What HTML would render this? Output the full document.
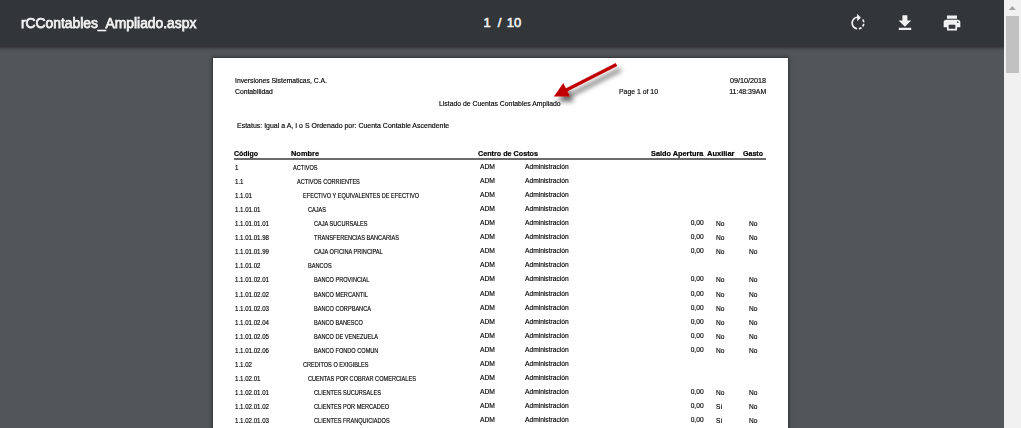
<!DOCTYPE html>
<html><head><meta charset="utf-8">
<style>
html,body{margin:0;padding:0;width:1021px;height:428px;overflow:hidden;background:#525659;font-family:"Liberation Sans",sans-serif;}
#tb{position:absolute;left:0;top:0;width:1004px;height:47px;background:#323639;z-index:3;}
#tbs{position:absolute;left:0;top:47px;width:1004px;height:4px;z-index:3;background:linear-gradient(rgba(20,0,0,.36),rgba(0,0,0,.14) 45%,rgba(0,0,0,0));}
#title{position:absolute;left:21px;top:15px;font-size:14px;font-weight:normal;-webkit-text-stroke:0.75px #f1f1f1;color:#f1f1f1;white-space:nowrap;line-height:16px;letter-spacing:0px;transform:scaleX(0.988);transform-origin:0 0;}
.pn{position:absolute;top:15px;font-size:13px;font-weight:normal;-webkit-text-stroke:0.6px #f1f1f1;color:#f1f1f1;white-space:nowrap;line-height:16px;}
.ic{position:absolute;fill:#f1f1f1;}
#sb{position:absolute;left:1004px;top:0;width:17px;height:428px;background:#f1f1f1;z-index:4;}
#thumb{position:absolute;left:2px;top:16px;width:13px;height:57px;background:#c1c1c1;}
#page{position:absolute;left:213px;top:58px;width:575px;height:400px;background:#fff;box-shadow:0 0 1px 1px rgba(0,0,0,.15),0 0 4px 1px rgba(0,0,0,.3);}
.t{position:absolute;white-space:nowrap;color:#000;font-size:7px;line-height:8px;transform-origin:0 0;-webkit-text-stroke:0.15px #000;}
</style></head><body>
<div id="tb">
  <div id="title">rCContables_Ampliado.aspx</div>
  <div class="pn" style="left:483.5px">1</div><div class="pn" style="left:497.8px">/</div><div class="pn" style="left:506.8px">10</div>
  <svg class="ic" style="left:848px;top:13.1px" width="20" height="20" viewBox="0 0 24 24"><path d="M15.55 5.55L11 1v3.07C7.06 4.56 4 7.920 4 12s3.05 7.44 7 7.93v-2.02c-2.84-.48-5-2.94-5-5.91s2.16-5.43 5-5.91V10l4.55-4.45zM19.93 11c-.17-1.39-.72-2.73-1.62-3.89l-1.42 1.42c.54.75.88 1.6 1.02 2.47h2.02zM13 17.9v2.02c1.39-.17 2.74-.71 3.9-1.61l-1.44-1.44c-.75.54-1.59.89-2.46 1.03zm3.89-2.42l1.42 1.41c.9-1.16 1.45-2.5 1.62-3.89h-2.02c-.14.87-.48 1.72-1.02 2.48z"/></svg>
  <svg class="ic" style="left:0;top:0" width="1004" height="47" viewBox="0 0 1004 47"><path d="M902.4 15.3h5v5.3h3.8l-6.3 6.1l-6.3-6.1h3.8z M898.8 27.8h12.4v2.2h-12.4z"/></svg>
  <svg class="ic" style="left:941.7px;top:12.7px" width="20" height="20" viewBox="0 0 24 24"><path d="M19 8H5c-1.66 0-3 1.34-3 3v6h4v4h12v-4h4v-6c0-1.66-1.34-3-3-3zm-3 11H8v-5h8v5zm3-7c-.55 0-1-.45-1-1s.45-1 1-1 1 .45 1 1-.45 1-1 1zm-1-9H6v4h12V3z"/></svg>
</div>
<div id="tbs"></div>
<div id="sb"><div id="thumb"></div><svg style="position:absolute;left:0;top:0" width="17" height="20"><path d="M4.8 10 L8.3 6 L11.8 10 Z" fill="#a3a3a3"/></svg></div>
<div id="page">
<div class="t" style="top:18.07px;font-size:7px;line-height:10px;left:21.70px;transform:scaleX(0.969);transform-origin:0 0;">Inversiones Sistematicas, C.A.</div>
<div class="t" style="top:29.07px;font-size:7px;line-height:10px;left:21.70px;transform:scaleX(0.970);transform-origin:0 0;">Contabilidad</div>
<div class="t" style="top:41.07px;font-size:7px;line-height:10px;left:226.30px;transform:scaleX(0.977);transform-origin:0 0;">Listado de Cuentas Contables Ampliado</div>
<div class="t" style="top:29.07px;font-size:7px;line-height:10px;left:406.20px;transform:scaleX(0.982);transform-origin:0 0;">Page 1 of 10</div>
<div class="t" style="top:18.07px;font-size:7px;line-height:10px;right:21.80px;transform:scaleX(1.030);transform-origin:100% 0;">09/10/2018</div>
<div class="t" style="top:29.07px;font-size:7px;line-height:10px;right:21.80px;transform:scaleX(0.994);transform-origin:100% 0;">11:48:39AM</div>
<div class="t" style="top:63.07px;font-size:7px;line-height:10px;left:23.80px;transform:scaleX(0.997);transform-origin:0 0;">Estatus: Igual a A, I o S Ordenado por: Cuenta Contable Ascendente</div>
<div class="t" style="top:91.07px;font-size:7px;line-height:10px;font-weight:bold;-webkit-text-stroke:0.2px #000;left:21.40px;transform:scaleX(0.996);transform-origin:0 0;">Código</div>
<div class="t" style="top:91.07px;font-size:7px;line-height:10px;font-weight:bold;-webkit-text-stroke:0.2px #000;left:78.20px;transform:scaleX(1.059);transform-origin:0 0;">Nombre</div>
<div class="t" style="top:91.07px;font-size:7px;line-height:10px;font-weight:bold;-webkit-text-stroke:0.2px #000;left:264.80px;transform:scaleX(1.028);transform-origin:0 0;">Centro de Costos</div>
<div class="t" style="top:91.07px;font-size:7px;line-height:10px;font-weight:bold;-webkit-text-stroke:0.2px #000;left:438.20px;transform:scaleX(1.048);transform-origin:0 0;">Saldo Apertura</div>
<div class="t" style="top:91.07px;font-size:7px;line-height:10px;font-weight:bold;-webkit-text-stroke:0.2px #000;left:494.20px;transform:scaleX(1.071);transform-origin:0 0;">Auxiliar</div>
<div class="t" style="top:91.07px;font-size:7px;line-height:10px;font-weight:bold;-webkit-text-stroke:0.2px #000;left:529.90px;transform:scaleX(1.008);transform-origin:0 0;">Gasto</div>
<div style="position:absolute;left:21.4px;top:100.0px;width:531.8px;height:2px;background:#6b6b6b"></div>
<div class="t" style="top:105.07px;font-size:7px;line-height:10px;left:21.60px;transform:scaleX(0.874);transform-origin:0 0;">1</div>
<div class="t" style="top:105.07px;font-size:7px;line-height:10px;left:79.60px;transform:scaleX(0.800);transform-origin:0 0;">ACTIVOS</div>
<div class="t" style="top:104.07px;font-size:7px;line-height:10px;-webkit-text-stroke:0.15px #000;left:266.90px;transform:scaleX(0.964);transform-origin:0 0;">ADM</div>
<div class="t" style="top:104.07px;font-size:7px;line-height:10px;-webkit-text-stroke:0.15px #000;left:312.20px;transform:scaleX(0.952);transform-origin:0 0;">Administración</div>
<div class="t" style="top:119.07px;font-size:7px;line-height:10px;left:21.60px;transform:scaleX(0.874);transform-origin:0 0;">1.1</div>
<div class="t" style="top:119.07px;font-size:7px;line-height:10px;left:83.60px;transform:scaleX(0.800);transform-origin:0 0;">ACTIVOS CORRIENTES</div>
<div class="t" style="top:118.07px;font-size:7px;line-height:10px;-webkit-text-stroke:0.15px #000;left:266.90px;transform:scaleX(0.964);transform-origin:0 0;">ADM</div>
<div class="t" style="top:118.07px;font-size:7px;line-height:10px;-webkit-text-stroke:0.15px #000;left:312.20px;transform:scaleX(0.952);transform-origin:0 0;">Administración</div>
<div class="t" style="top:133.07px;font-size:7px;line-height:10px;left:21.60px;transform:scaleX(0.874);transform-origin:0 0;">1.1.01</div>
<div class="t" style="top:133.07px;font-size:7px;line-height:10px;left:89.90px;transform:scaleX(0.800);transform-origin:0 0;">EFECTIVO Y EQUIVALENTES DE EFECTIVO</div>
<div class="t" style="top:132.07px;font-size:7px;line-height:10px;-webkit-text-stroke:0.15px #000;left:266.90px;transform:scaleX(0.964);transform-origin:0 0;">ADM</div>
<div class="t" style="top:132.07px;font-size:7px;line-height:10px;-webkit-text-stroke:0.15px #000;left:312.20px;transform:scaleX(0.952);transform-origin:0 0;">Administración</div>
<div class="t" style="top:147.07px;font-size:7px;line-height:10px;left:21.60px;transform:scaleX(0.874);transform-origin:0 0;">1.1.01.01</div>
<div class="t" style="top:147.07px;font-size:7px;line-height:10px;left:95.40px;transform:scaleX(0.800);transform-origin:0 0;">CAJAS</div>
<div class="t" style="top:146.07px;font-size:7px;line-height:10px;-webkit-text-stroke:0.15px #000;left:266.90px;transform:scaleX(0.964);transform-origin:0 0;">ADM</div>
<div class="t" style="top:146.07px;font-size:7px;line-height:10px;-webkit-text-stroke:0.15px #000;left:312.20px;transform:scaleX(0.952);transform-origin:0 0;">Administración</div>
<div class="t" style="top:161.07px;font-size:7px;line-height:10px;left:21.60px;transform:scaleX(0.874);transform-origin:0 0;">1.1.01.01.01</div>
<div class="t" style="top:161.07px;font-size:7px;line-height:10px;left:101.20px;transform:scaleX(0.800);transform-origin:0 0;">CAJA SUCURSALES</div>
<div class="t" style="top:160.07px;font-size:7px;line-height:10px;-webkit-text-stroke:0.15px #000;left:266.90px;transform:scaleX(0.964);transform-origin:0 0;">ADM</div>
<div class="t" style="top:160.07px;font-size:7px;line-height:10px;-webkit-text-stroke:0.15px #000;left:312.20px;transform:scaleX(0.952);transform-origin:0 0;">Administración</div>
<div class="t" style="top:160.07px;font-size:7px;line-height:10px;-webkit-text-stroke:0.15px #000;right:84.70px;transform:scaleX(0.954);transform-origin:100% 0;">0,00</div>
<div class="t" style="top:161.07px;font-size:7px;line-height:10px;-webkit-text-stroke:0.15px #000;left:503.30px;transform:scaleX(0.940);transform-origin:0 0;">No</div>
<div class="t" style="top:161.07px;font-size:7px;line-height:10px;-webkit-text-stroke:0.15px #000;left:536.40px;transform:scaleX(0.940);transform-origin:0 0;">No</div>
<div class="t" style="top:175.07px;font-size:7px;line-height:10px;left:21.60px;transform:scaleX(0.874);transform-origin:0 0;">1.1.01.01.98</div>
<div class="t" style="top:175.07px;font-size:7px;line-height:10px;left:101.20px;transform:scaleX(0.800);transform-origin:0 0;">TRANSFERENCIAS BANCARIAS</div>
<div class="t" style="top:174.07px;font-size:7px;line-height:10px;-webkit-text-stroke:0.15px #000;left:266.90px;transform:scaleX(0.964);transform-origin:0 0;">ADM</div>
<div class="t" style="top:174.07px;font-size:7px;line-height:10px;-webkit-text-stroke:0.15px #000;left:312.20px;transform:scaleX(0.952);transform-origin:0 0;">Administración</div>
<div class="t" style="top:174.07px;font-size:7px;line-height:10px;-webkit-text-stroke:0.15px #000;right:84.70px;transform:scaleX(0.954);transform-origin:100% 0;">0,00</div>
<div class="t" style="top:175.07px;font-size:7px;line-height:10px;-webkit-text-stroke:0.15px #000;left:503.30px;transform:scaleX(0.940);transform-origin:0 0;">No</div>
<div class="t" style="top:175.07px;font-size:7px;line-height:10px;-webkit-text-stroke:0.15px #000;left:536.40px;transform:scaleX(0.940);transform-origin:0 0;">No</div>
<div class="t" style="top:189.07px;font-size:7px;line-height:10px;left:21.60px;transform:scaleX(0.874);transform-origin:0 0;">1.1.01.01.99</div>
<div class="t" style="top:189.07px;font-size:7px;line-height:10px;left:101.20px;transform:scaleX(0.800);transform-origin:0 0;">CAJA OFICINA PRINCIPAL</div>
<div class="t" style="top:188.07px;font-size:7px;line-height:10px;-webkit-text-stroke:0.15px #000;left:266.90px;transform:scaleX(0.964);transform-origin:0 0;">ADM</div>
<div class="t" style="top:188.07px;font-size:7px;line-height:10px;-webkit-text-stroke:0.15px #000;left:312.20px;transform:scaleX(0.952);transform-origin:0 0;">Administración</div>
<div class="t" style="top:188.07px;font-size:7px;line-height:10px;-webkit-text-stroke:0.15px #000;right:84.70px;transform:scaleX(0.954);transform-origin:100% 0;">0,00</div>
<div class="t" style="top:189.07px;font-size:7px;line-height:10px;-webkit-text-stroke:0.15px #000;left:503.30px;transform:scaleX(0.940);transform-origin:0 0;">No</div>
<div class="t" style="top:189.07px;font-size:7px;line-height:10px;-webkit-text-stroke:0.15px #000;left:536.40px;transform:scaleX(0.940);transform-origin:0 0;">No</div>
<div class="t" style="top:203.07px;font-size:7px;line-height:10px;left:21.60px;transform:scaleX(0.874);transform-origin:0 0;">1.1.01.02</div>
<div class="t" style="top:203.07px;font-size:7px;line-height:10px;left:95.40px;transform:scaleX(0.800);transform-origin:0 0;">BANCOS</div>
<div class="t" style="top:202.07px;font-size:7px;line-height:10px;-webkit-text-stroke:0.15px #000;left:266.90px;transform:scaleX(0.964);transform-origin:0 0;">ADM</div>
<div class="t" style="top:202.07px;font-size:7px;line-height:10px;-webkit-text-stroke:0.15px #000;left:312.20px;transform:scaleX(0.952);transform-origin:0 0;">Administración</div>
<div class="t" style="top:217.07px;font-size:7px;line-height:10px;left:21.60px;transform:scaleX(0.874);transform-origin:0 0;">1.1.01.02.01</div>
<div class="t" style="top:217.07px;font-size:7px;line-height:10px;left:101.20px;transform:scaleX(0.800);transform-origin:0 0;">BANCO PROVINCIAL</div>
<div class="t" style="top:216.07px;font-size:7px;line-height:10px;-webkit-text-stroke:0.15px #000;left:266.90px;transform:scaleX(0.964);transform-origin:0 0;">ADM</div>
<div class="t" style="top:216.07px;font-size:7px;line-height:10px;-webkit-text-stroke:0.15px #000;left:312.20px;transform:scaleX(0.952);transform-origin:0 0;">Administración</div>
<div class="t" style="top:216.07px;font-size:7px;line-height:10px;-webkit-text-stroke:0.15px #000;right:84.70px;transform:scaleX(0.954);transform-origin:100% 0;">0,00</div>
<div class="t" style="top:217.07px;font-size:7px;line-height:10px;-webkit-text-stroke:0.15px #000;left:503.30px;transform:scaleX(0.940);transform-origin:0 0;">No</div>
<div class="t" style="top:217.07px;font-size:7px;line-height:10px;-webkit-text-stroke:0.15px #000;left:536.40px;transform:scaleX(0.940);transform-origin:0 0;">No</div>
<div class="t" style="top:232.07px;font-size:7px;line-height:10px;left:21.60px;transform:scaleX(0.874);transform-origin:0 0;">1.1.01.02.02</div>
<div class="t" style="top:232.07px;font-size:7px;line-height:10px;left:101.20px;transform:scaleX(0.800);transform-origin:0 0;">BANCO MERCANTIL</div>
<div class="t" style="top:231.07px;font-size:7px;line-height:10px;-webkit-text-stroke:0.15px #000;left:266.90px;transform:scaleX(0.964);transform-origin:0 0;">ADM</div>
<div class="t" style="top:231.07px;font-size:7px;line-height:10px;-webkit-text-stroke:0.15px #000;left:312.20px;transform:scaleX(0.952);transform-origin:0 0;">Administración</div>
<div class="t" style="top:231.07px;font-size:7px;line-height:10px;-webkit-text-stroke:0.15px #000;right:84.70px;transform:scaleX(0.954);transform-origin:100% 0;">0,00</div>
<div class="t" style="top:232.07px;font-size:7px;line-height:10px;-webkit-text-stroke:0.15px #000;left:503.30px;transform:scaleX(0.940);transform-origin:0 0;">No</div>
<div class="t" style="top:232.07px;font-size:7px;line-height:10px;-webkit-text-stroke:0.15px #000;left:536.40px;transform:scaleX(0.940);transform-origin:0 0;">No</div>
<div class="t" style="top:246.07px;font-size:7px;line-height:10px;left:21.60px;transform:scaleX(0.874);transform-origin:0 0;">1.1.01.02.03</div>
<div class="t" style="top:246.07px;font-size:7px;line-height:10px;left:101.20px;transform:scaleX(0.800);transform-origin:0 0;">BANCO CORPBANCA</div>
<div class="t" style="top:245.07px;font-size:7px;line-height:10px;-webkit-text-stroke:0.15px #000;left:266.90px;transform:scaleX(0.964);transform-origin:0 0;">ADM</div>
<div class="t" style="top:245.07px;font-size:7px;line-height:10px;-webkit-text-stroke:0.15px #000;left:312.20px;transform:scaleX(0.952);transform-origin:0 0;">Administración</div>
<div class="t" style="top:245.07px;font-size:7px;line-height:10px;-webkit-text-stroke:0.15px #000;right:84.70px;transform:scaleX(0.954);transform-origin:100% 0;">0,00</div>
<div class="t" style="top:246.07px;font-size:7px;line-height:10px;-webkit-text-stroke:0.15px #000;left:503.30px;transform:scaleX(0.940);transform-origin:0 0;">No</div>
<div class="t" style="top:246.07px;font-size:7px;line-height:10px;-webkit-text-stroke:0.15px #000;left:536.40px;transform:scaleX(0.940);transform-origin:0 0;">No</div>
<div class="t" style="top:260.07px;font-size:7px;line-height:10px;left:21.60px;transform:scaleX(0.874);transform-origin:0 0;">1.1.01.02.04</div>
<div class="t" style="top:260.07px;font-size:7px;line-height:10px;left:101.20px;transform:scaleX(0.800);transform-origin:0 0;">BANCO BANESCO</div>
<div class="t" style="top:259.07px;font-size:7px;line-height:10px;-webkit-text-stroke:0.15px #000;left:266.90px;transform:scaleX(0.964);transform-origin:0 0;">ADM</div>
<div class="t" style="top:259.07px;font-size:7px;line-height:10px;-webkit-text-stroke:0.15px #000;left:312.20px;transform:scaleX(0.952);transform-origin:0 0;">Administración</div>
<div class="t" style="top:259.07px;font-size:7px;line-height:10px;-webkit-text-stroke:0.15px #000;right:84.70px;transform:scaleX(0.954);transform-origin:100% 0;">0,00</div>
<div class="t" style="top:260.07px;font-size:7px;line-height:10px;-webkit-text-stroke:0.15px #000;left:503.30px;transform:scaleX(0.940);transform-origin:0 0;">No</div>
<div class="t" style="top:260.07px;font-size:7px;line-height:10px;-webkit-text-stroke:0.15px #000;left:536.40px;transform:scaleX(0.940);transform-origin:0 0;">No</div>
<div class="t" style="top:274.07px;font-size:7px;line-height:10px;left:21.60px;transform:scaleX(0.874);transform-origin:0 0;">1.1.01.02.05</div>
<div class="t" style="top:274.07px;font-size:7px;line-height:10px;left:101.20px;transform:scaleX(0.800);transform-origin:0 0;">BANCO DE VENEZUELA</div>
<div class="t" style="top:273.07px;font-size:7px;line-height:10px;-webkit-text-stroke:0.15px #000;left:266.90px;transform:scaleX(0.964);transform-origin:0 0;">ADM</div>
<div class="t" style="top:273.07px;font-size:7px;line-height:10px;-webkit-text-stroke:0.15px #000;left:312.20px;transform:scaleX(0.952);transform-origin:0 0;">Administración</div>
<div class="t" style="top:273.07px;font-size:7px;line-height:10px;-webkit-text-stroke:0.15px #000;right:84.70px;transform:scaleX(0.954);transform-origin:100% 0;">0,00</div>
<div class="t" style="top:274.07px;font-size:7px;line-height:10px;-webkit-text-stroke:0.15px #000;left:503.30px;transform:scaleX(0.940);transform-origin:0 0;">No</div>
<div class="t" style="top:274.07px;font-size:7px;line-height:10px;-webkit-text-stroke:0.15px #000;left:536.40px;transform:scaleX(0.940);transform-origin:0 0;">No</div>
<div class="t" style="top:288.07px;font-size:7px;line-height:10px;left:21.60px;transform:scaleX(0.874);transform-origin:0 0;">1.1.01.02.06</div>
<div class="t" style="top:288.07px;font-size:7px;line-height:10px;left:101.20px;transform:scaleX(0.800);transform-origin:0 0;">BANCO FONDO COMUN</div>
<div class="t" style="top:287.07px;font-size:7px;line-height:10px;-webkit-text-stroke:0.15px #000;left:266.90px;transform:scaleX(0.964);transform-origin:0 0;">ADM</div>
<div class="t" style="top:287.07px;font-size:7px;line-height:10px;-webkit-text-stroke:0.15px #000;left:312.20px;transform:scaleX(0.952);transform-origin:0 0;">Administración</div>
<div class="t" style="top:287.07px;font-size:7px;line-height:10px;-webkit-text-stroke:0.15px #000;right:84.70px;transform:scaleX(0.954);transform-origin:100% 0;">0,00</div>
<div class="t" style="top:288.07px;font-size:7px;line-height:10px;-webkit-text-stroke:0.15px #000;left:503.30px;transform:scaleX(0.940);transform-origin:0 0;">No</div>
<div class="t" style="top:288.07px;font-size:7px;line-height:10px;-webkit-text-stroke:0.15px #000;left:536.40px;transform:scaleX(0.940);transform-origin:0 0;">No</div>
<div class="t" style="top:302.07px;font-size:7px;line-height:10px;left:21.60px;transform:scaleX(0.874);transform-origin:0 0;">1.1.02</div>
<div class="t" style="top:302.07px;font-size:7px;line-height:10px;left:89.90px;transform:scaleX(0.800);transform-origin:0 0;">CREDITOS O EXIGIBLES</div>
<div class="t" style="top:301.07px;font-size:7px;line-height:10px;-webkit-text-stroke:0.15px #000;left:266.90px;transform:scaleX(0.964);transform-origin:0 0;">ADM</div>
<div class="t" style="top:301.07px;font-size:7px;line-height:10px;-webkit-text-stroke:0.15px #000;left:312.20px;transform:scaleX(0.952);transform-origin:0 0;">Administración</div>
<div class="t" style="top:316.07px;font-size:7px;line-height:10px;left:21.60px;transform:scaleX(0.874);transform-origin:0 0;">1.1.02.01</div>
<div class="t" style="top:316.07px;font-size:7px;line-height:10px;left:95.40px;transform:scaleX(0.800);transform-origin:0 0;">CUENTAS POR COBRAR COMERCIALES</div>
<div class="t" style="top:315.07px;font-size:7px;line-height:10px;-webkit-text-stroke:0.15px #000;left:266.90px;transform:scaleX(0.964);transform-origin:0 0;">ADM</div>
<div class="t" style="top:315.07px;font-size:7px;line-height:10px;-webkit-text-stroke:0.15px #000;left:312.20px;transform:scaleX(0.952);transform-origin:0 0;">Administración</div>
<div class="t" style="top:330.07px;font-size:7px;line-height:10px;left:21.60px;transform:scaleX(0.874);transform-origin:0 0;">1.1.02.01.01</div>
<div class="t" style="top:330.07px;font-size:7px;line-height:10px;left:101.20px;transform:scaleX(0.800);transform-origin:0 0;">CLIENTES SUCURSALES</div>
<div class="t" style="top:329.07px;font-size:7px;line-height:10px;-webkit-text-stroke:0.15px #000;left:266.90px;transform:scaleX(0.964);transform-origin:0 0;">ADM</div>
<div class="t" style="top:329.07px;font-size:7px;line-height:10px;-webkit-text-stroke:0.15px #000;left:312.20px;transform:scaleX(0.952);transform-origin:0 0;">Administración</div>
<div class="t" style="top:329.07px;font-size:7px;line-height:10px;-webkit-text-stroke:0.15px #000;right:84.70px;transform:scaleX(0.954);transform-origin:100% 0;">0,00</div>
<div class="t" style="top:330.07px;font-size:7px;line-height:10px;-webkit-text-stroke:0.15px #000;left:503.30px;transform:scaleX(0.940);transform-origin:0 0;">No</div>
<div class="t" style="top:330.07px;font-size:7px;line-height:10px;-webkit-text-stroke:0.15px #000;left:536.40px;transform:scaleX(0.940);transform-origin:0 0;">No</div>
<div class="t" style="top:344.07px;font-size:7px;line-height:10px;left:21.60px;transform:scaleX(0.874);transform-origin:0 0;">1.1.02.01.02</div>
<div class="t" style="top:344.07px;font-size:7px;line-height:10px;left:101.20px;transform:scaleX(0.800);transform-origin:0 0;">CLIENTES POR MERCADEO</div>
<div class="t" style="top:343.07px;font-size:7px;line-height:10px;-webkit-text-stroke:0.15px #000;left:266.90px;transform:scaleX(0.964);transform-origin:0 0;">ADM</div>
<div class="t" style="top:343.07px;font-size:7px;line-height:10px;-webkit-text-stroke:0.15px #000;left:312.20px;transform:scaleX(0.952);transform-origin:0 0;">Administración</div>
<div class="t" style="top:343.07px;font-size:7px;line-height:10px;-webkit-text-stroke:0.15px #000;right:84.70px;transform:scaleX(0.954);transform-origin:100% 0;">0,00</div>
<div class="t" style="top:344.07px;font-size:7px;line-height:10px;-webkit-text-stroke:0.15px #000;left:503.30px;transform:scaleX(0.940);transform-origin:0 0;">Sí</div>
<div class="t" style="top:344.07px;font-size:7px;line-height:10px;-webkit-text-stroke:0.15px #000;left:536.40px;transform:scaleX(0.940);transform-origin:0 0;">No</div>
<div class="t" style="top:358.07px;font-size:7px;line-height:10px;left:21.60px;transform:scaleX(0.874);transform-origin:0 0;">1.1.02.01.03</div>
<div class="t" style="top:358.07px;font-size:7px;line-height:10px;left:101.20px;transform:scaleX(0.800);transform-origin:0 0;">CLIENTES FRANQUICIADOS</div>
<div class="t" style="top:357.07px;font-size:7px;line-height:10px;-webkit-text-stroke:0.15px #000;left:266.90px;transform:scaleX(0.964);transform-origin:0 0;">ADM</div>
<div class="t" style="top:357.07px;font-size:7px;line-height:10px;-webkit-text-stroke:0.15px #000;left:312.20px;transform:scaleX(0.952);transform-origin:0 0;">Administración</div>
<div class="t" style="top:357.07px;font-size:7px;line-height:10px;-webkit-text-stroke:0.15px #000;right:84.70px;transform:scaleX(0.954);transform-origin:100% 0;">0,00</div>
<div class="t" style="top:358.07px;font-size:7px;line-height:10px;-webkit-text-stroke:0.15px #000;left:503.30px;transform:scaleX(0.940);transform-origin:0 0;">Sí</div>
<div class="t" style="top:358.07px;font-size:7px;line-height:10px;-webkit-text-stroke:0.15px #000;left:536.40px;transform:scaleX(0.940);transform-origin:0 0;">No</div>
<svg style="position:absolute;left:0;top:0;overflow:visible" width="575" height="100" viewBox="0 0 575 100">
<defs><filter id="sh" x="-50%" y="-50%" width="200%" height="200%"><feDropShadow dx="4" dy="5" stdDeviation="2.6" flood-color="#000" flood-opacity="0.6"/></filter></defs>
<g filter="url(#sh)" fill="#c00000" stroke="none">
<path d="M403.5 6.4 L348 34.76" stroke="#c00000" stroke-width="3.4" fill="none"/>
<path d="M340.9 38.5 L350.3 25.05 L356.9 38.5 Z"/>
</g></svg>
</div>
</body></html>
